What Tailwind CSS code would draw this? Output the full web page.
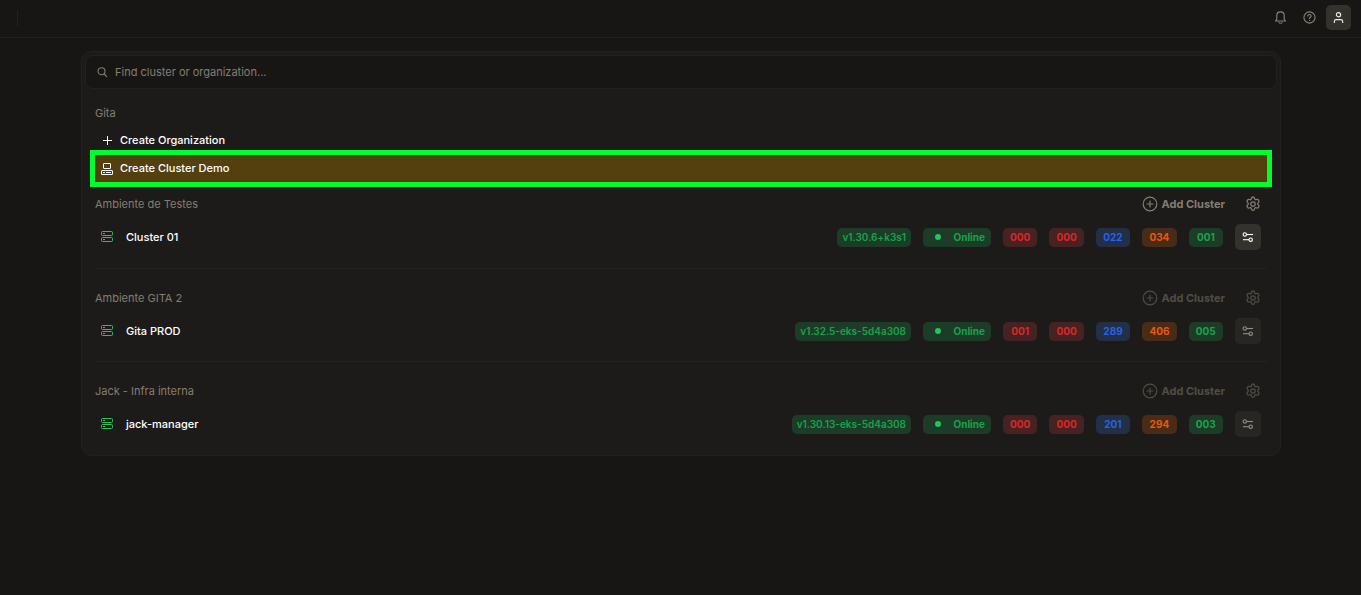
<!DOCTYPE html>
<html lang="en">

<head>
    <meta charset="UTF-8">
    <meta name="viewport" content="width=device-width, initial-scale=1.0">
    <title>Clusters</title>
    <script src="https://cdn.jsdelivr.net/npm/@tailwindcss/browser@4"></script>
</head>

<body class="min-h-screen bg-[#171614] font-['Inter',sans-serif] text-[11px] text-white">

    <!-- Shared icons -->
    <svg class="hidden">
        <symbol id="icon-server" viewBox="0 0 12 12" fill="none" stroke="currentColor">
            <rect x=".5" y=".5" width="11" height="4" rx="1" />
            <rect x=".5" y="6.5" width="11" height="4" rx="1" />
            <path d="M2 2.5h2M2 8.5h2" />
        </symbol>
        <symbol id="icon-plus-circle" viewBox="0 0 16 16" fill="none" stroke="currentColor" stroke-width="1.2">
            <circle cx="8" cy="8" r="6.8" />
            <path d="M8 5v6M5 8h6" stroke-linecap="round" />
        </symbol>
        <symbol id="icon-gear" viewBox="0 0 24 24" fill="none" stroke="currentColor" stroke-width="1.9" stroke-linejoin="round">
            <path d="M12 1.5c1.5 0 2 .6 2.3 1.9l.3 1.3c.2.7.9 1.1 1.6.9l1.5-.4c1.3-.4 2 0 2.8 1.3s.8 2.1-.2 3.1l-1 1.1c-.5.5-.5 1.3 0 1.8l1 1c1 1 1 1.9.2 3.2s-1.5 1.6-2.8 1.3l-1.5-.4c-.7-.2-1.4.2-1.6.9l-.3 1.3c-.3 1.3-.8 1.9-2.3 1.9s-2-.6-2.3-1.9l-.3-1.3c-.2-.7-.9-1.1-1.6-.9l-1.5.4c-1.3.3-2 0-2.8-1.3s-.8-2.2.2-3.2l1-1c.5-.5.5-1.3 0-1.8l-1-1.1c-1-1-1-1.8-.2-3.1s1.5-1.7 2.8-1.3l1.5.4c.7.2 1.4-.2 1.6-.9l.3-1.3C10 2.1 10.5 1.5 12 1.5Z" />
            <circle cx="12" cy="12" r="3.3" />
        </symbol>
        <symbol id="icon-sliders" viewBox="0 0 12 12" fill="none" stroke="currentColor" stroke-width="1.1">
            <circle cx="2.8" cy="3.5" r="1.7" />
            <path d="M4.5 3.5H11" />
            <circle cx="8.7" cy="8.7" r="1.7" />
            <path d="M1 8.7h6" />
        </symbol>
    </svg>

    <!-- Top bar -->
    <header class="flex h-[38px] items-center border-b border-[#21201e] pr-2.5 pb-0.5 pl-[17px]">
        <div class="h-4 w-px bg-[#23221f]"></div>
        <nav class="ml-auto flex items-center gap-1">
            <button type="button" aria-label="Notifications" class="flex size-[25px] items-center justify-center text-[#8a8376]">
                <svg class="size-[13px]" viewBox="0 0 14 14" fill="none" stroke="currentColor" stroke-width="1.2" stroke-linejoin="round">
                    <path d="M3 4.8C3 2.6 4.6 1 7 1s4 1.600 4 3.800v4l1.300 2H1.700l1.300-2Z" />
                    <path d="M5.300 12.600c.8.800 2.600.800 3.400 0" stroke-linecap="round" />
                </svg>
            </button>
            <button type="button" aria-label="Help" class="flex size-[25px] items-center justify-center text-[#8a8376]">
                <svg class="size-[13px]" viewBox="0 0 14 14" fill="none" stroke="currentColor" stroke-width="1.2" stroke-linecap="round">
                    <circle cx="7" cy="7" r="6" />
                    <path d="M5.2 5.5c0-1 .8-1.7 1.8-1.7s1.8.7 1.8 1.600c0 1.300-1.800 1.300-1.800 2.700M7 10.100v.1" />
                </svg>
            </button>
            <button type="button" aria-label="Account" class="flex size-[25px] items-center justify-center rounded-[5px] bg-[#33322d] text-[#eeeeec]">
                <svg class="size-[13px]" viewBox="0 0 14 14" fill="none" stroke="currentColor" stroke-width="1.2">
                    <circle cx="7" cy="4" r="2.3" />
                    <path d="M2.5 12.8v-1.500c0-1.200.8-2 2-2h5c1.200 0 2 .8 2 2v1.500" />
                </svg>
            </button>
        </nav>
    </header>

    <main class="pt-[13px] pr-4 pl-[17px]">
        <div class="mx-auto max-w-[1200px] rounded-[10px] border border-[#22211f] bg-[#1c1b19] p-[3px]">

            <!-- Search -->
            <label class="flex h-[34px] items-center gap-[7px] rounded-lg border border-[#22211f] bg-[#171614] px-2.5 text-[#857e70]">
                <svg class="size-3" viewBox="0 0 12 12" fill="none" stroke="currentColor" stroke-width="1.1" stroke-linecap="round">
                    <circle cx="5.5" cy="5.2" r="3.5" />
                    <path d="m8.200 8 2.500 2.600" />
                </svg>
                <input type="text" aria-label="Find cluster or organization" placeholder="Find cluster or organization..." class="grow outline-none placeholder:text-[#857e70]">
            </label>

            <div class="px-2.5 pt-2.5 pb-1">
                <!-- Gita -->
                <section>
                    <h2 class="flex h-7 items-center text-[#857e70]">Gita</h2>
                    <button type="button" class="flex h-[26px] w-full items-center gap-[7px] px-1.5 font-medium">
                        <svg class="size-3" viewBox="0 0 12 12" stroke="currentColor">
                            <path d="M6.5 2v9M2 6.5h9" />
                        </svg>
                        Create Organization
                    </button>
                    <button type="button" class="mt-0.5 flex h-[27px] w-full items-center gap-[7px] bg-[#54400f] px-1.5 font-medium outline-5 outline-[#00ff2f]">
                        <svg class="size-3" viewBox="0 0 12 12" fill="none" stroke="currentColor">
                            <rect x="2.5" y=".5" width="7" height="5" rx=".5" />
                            <rect x=".5" y="7.5" width="11" height="4" rx=".5" />
                            <path d="M2 9.500h2M5 9.500h5" />
                        </svg>
                        Create Cluster Demo
                    </button>
                </section>

                <!-- Ambiente de Testes -->
                <section class="mt-2 border-b border-[#23221f] pb-[18px]">
                    <div class="flex h-7 items-center text-[#857e70]">
                        <h2>Ambiente de Testes</h2>
                        <button type="button" class="ml-auto flex items-center gap-[3px] font-bold">
                            <svg class="size-4"><use href="#icon-plus-circle" /></svg>
                            Add Cluster
                        </button>
                        <button type="button" aria-label="Organization settings" class="mr-1.5 ml-5">
                            <svg class="size-4"><use href="#icon-gear" /></svg>
                        </button>
                    </div>
                    <div class="mt-1.5 flex h-[26px] items-center px-1.5">
                        <svg class="mr-[13px] size-3 text-[#22c55e]"><use href="#icon-server" /></svg>
                        <a href="#" class="font-medium">Cluster 01</a>
                        <div class="ml-auto flex items-center gap-3 text-[10px] leading-[19px] font-bold">
                            <span class="rounded-[5px] bg-[#22c55e]/20 px-[5px] font-semibold text-[#16a34a]">v1.30.6+k3s1</span>
                            <span class="flex w-[68px] items-center rounded-[5px] bg-[#22c55e]/20 pr-1.5 pl-3 text-[#16a34a]">
                                <i class="mr-auto size-1.5 rounded-full bg-[#22c55e]"></i>Online
                            </span>
                            <div class="grid w-[220px] grid-cols-5 gap-3 text-center">
                                <span class="rounded-[5px] bg-[#ef4444]/20 text-[#dc2626]">000</span>
                                <span class="rounded-[5px] bg-[#ef4444]/20 text-[#dc2626]">000</span>
                                <span class="rounded-[5px] bg-[#3b82f6]/20 text-[#2563eb]">022</span>
                                <span class="rounded-[5px] bg-[#f97316]/20 text-[#ea580c]">034</span>
                                <span class="rounded-[5px] bg-[#22c55e]/20 text-[#16a34a]">001</span>
                            </div>
                            <button type="button" aria-label="Cluster options" class="flex size-[26px] items-center justify-center rounded-[5px] bg-[#33322d] text-white">
                                <svg class="size-3"><use href="#icon-sliders" /></svg>
                            </button>
                        </div>
                    </div>
                </section>

                <!-- Ambiente GITA 2 -->
                <section class="mt-[15px] border-b border-[#23221f] pb-[17px]">
                    <div class="flex h-7 items-center text-[#857e70]">
                        <h2>Ambiente GITA 2</h2>
                        <button type="button" disabled class="ml-auto flex items-center gap-[3px] font-bold opacity-50">
                            <svg class="size-4"><use href="#icon-plus-circle" /></svg>
                            Add Cluster
                        </button>
                        <button type="button" disabled aria-label="Organization settings" class="mr-1.5 ml-5 opacity-50">
                            <svg class="size-4"><use href="#icon-gear" /></svg>
                        </button>
                    </div>
                    <div class="mt-1.5 flex h-[26px] items-center px-1.5">
                        <svg class="mr-[13px] size-3 text-[#22c55e]"><use href="#icon-server" /></svg>
                        <a href="#" class="font-medium">Gita PROD</a>
                        <div class="ml-auto flex items-center gap-3 text-[10px] leading-[19px] font-bold">
                            <span class="rounded-[5px] bg-[#22c55e]/20 px-[5px] font-semibold text-[#16a34a]">v1.32.5-eks-5d4a308</span>
                            <span class="flex w-[68px] items-center rounded-[5px] bg-[#22c55e]/20 pr-1.5 pl-3 text-[#16a34a]">
                                <i class="mr-auto size-1.5 rounded-full bg-[#22c55e]"></i>Online
                            </span>
                            <div class="grid w-[220px] grid-cols-5 gap-3 text-center">
                                <span class="rounded-[5px] bg-[#ef4444]/20 text-[#dc2626]">001</span>
                                <span class="rounded-[5px] bg-[#ef4444]/20 text-[#dc2626]">000</span>
                                <span class="rounded-[5px] bg-[#3b82f6]/20 text-[#2563eb]">289</span>
                                <span class="rounded-[5px] bg-[#f97316]/20 text-[#ea580c]">406</span>
                                <span class="rounded-[5px] bg-[#22c55e]/20 text-[#16a34a]">005</span>
                            </div>
                            <button type="button" disabled aria-label="Cluster options" class="flex size-[26px] items-center justify-center rounded-[5px] bg-[#33322d] text-white opacity-50">
                                <svg class="size-3"><use href="#icon-sliders" /></svg>
                            </button>
                        </div>
                    </div>
                </section>

                <!-- Jack - Infra interna -->
                <section class="mt-[15px] pb-[11px]">
                    <div class="flex h-7 items-center text-[#857e70]">
                        <h2>Jack - Infra interna</h2>
                        <button type="button" disabled class="ml-auto flex items-center gap-[3px] font-bold opacity-50">
                            <svg class="size-4"><use href="#icon-plus-circle" /></svg>
                            Add Cluster
                        </button>
                        <button type="button" disabled aria-label="Organization settings" class="mr-1.5 ml-5 opacity-50">
                            <svg class="size-4"><use href="#icon-gear" /></svg>
                        </button>
                    </div>
                    <div class="mt-1.5 flex h-[26px] items-center px-1.5">
                        <svg class="mr-[13px] size-3 text-[#22c55e]"><use href="#icon-server" /></svg>
                        <a href="#" class="font-medium">jack-manager</a>
                        <div class="ml-auto flex items-center gap-3 text-[10px] leading-[19px] font-bold">
                            <span class="rounded-[5px] bg-[#22c55e]/20 px-[5px] font-semibold text-[#16a34a]">v1.30.13-eks-5d4a308</span>
                            <span class="flex w-[68px] items-center rounded-[5px] bg-[#22c55e]/20 pr-1.5 pl-3 text-[#16a34a]">
                                <i class="mr-auto size-1.5 rounded-full bg-[#22c55e]"></i>Online
                            </span>
                            <div class="grid w-[220px] grid-cols-5 gap-3 text-center">
                                <span class="rounded-[5px] bg-[#ef4444]/20 text-[#dc2626]">000</span>
                                <span class="rounded-[5px] bg-[#ef4444]/20 text-[#dc2626]">000</span>
                                <span class="rounded-[5px] bg-[#3b82f6]/20 text-[#2563eb]">201</span>
                                <span class="rounded-[5px] bg-[#f97316]/20 text-[#ea580c]">294</span>
                                <span class="rounded-[5px] bg-[#22c55e]/20 text-[#16a34a]">003</span>
                            </div>
                            <button type="button" disabled aria-label="Cluster options" class="flex size-[26px] items-center justify-center rounded-[5px] bg-[#33322d] text-white opacity-50">
                                <svg class="size-3"><use href="#icon-sliders" /></svg>
                            </button>
                        </div>
                    </div>
                </section>
            </div>
        </div>
    </main>

</body>

</html>
